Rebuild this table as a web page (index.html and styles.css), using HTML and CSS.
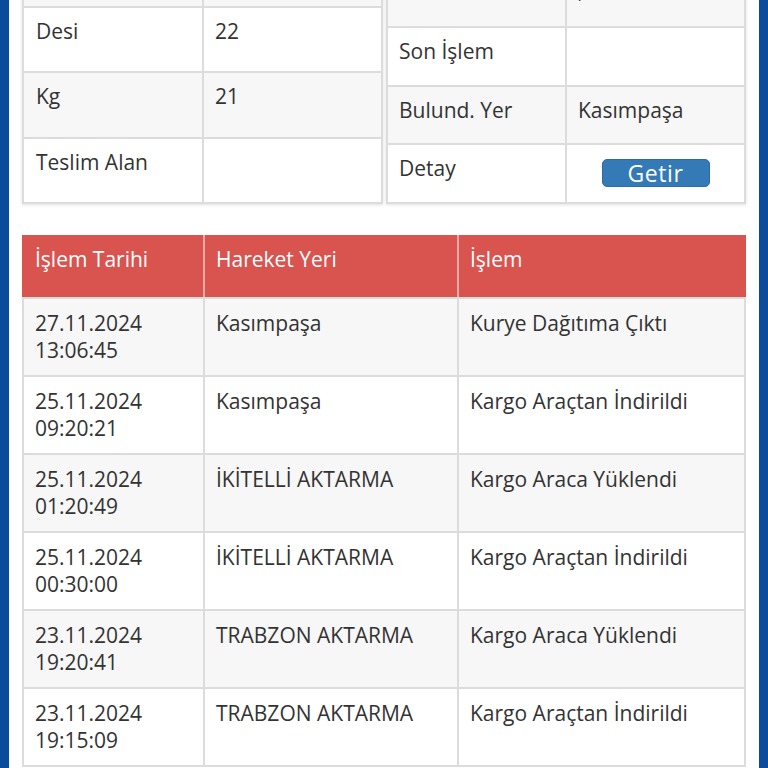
FILE: index.html
```html
<!DOCTYPE html>
<html lang="tr">
<head>
<meta charset="utf-8">
<title>Kargo Takip</title>
<link rel="stylesheet" href="styles.css">
</head>
<body>
<div class="frame">
  <div class="side"></div>
  <main class="main">
    <section class="info">
      <div class="kv kv-left">
        <div class="kv-row alt"><div class="k"></div><div class="v"></div></div>
        <div class="kv-row"><div class="k">Desi</div><div class="v">22</div></div>
        <div class="kv-row alt"><div class="k">Kg</div><div class="v">21</div></div>
        <div class="kv-row"><div class="k">Teslim Alan</div><div class="v"></div></div>
      </div>
      <div class="kv kv-right">
        <div class="kv-row alt"><div class="k"></div><div class="v">,</div></div>
        <div class="kv-row"><div class="k">Son İşlem</div><div class="v"></div></div>
        <div class="kv-row alt"><div class="k">Bulund. Yer</div><div class="v">Kasımpaşa</div></div>
        <div class="kv-row"><div class="k">Detay</div><div class="v center"><button class="btn">Getir</button></div></div>
      </div>
    </section>

    <section class="moves">
      <div class="mv-row mv-head">
        <div class="c">İşlem Tarihi</div><div class="c">Hareket Yeri</div><div class="c">İşlem</div>
      </div>
      <div class="mv-row alt">
        <div class="c">27.11.2024<br>13:06:45</div><div class="c">Kasımpaşa</div><div class="c">Kurye Dağıtıma Çıktı</div>
      </div>
      <div class="mv-row">
        <div class="c">25.11.2024<br>09:20:21</div><div class="c">Kasımpaşa</div><div class="c">Kargo Araçtan İndirildi</div>
      </div>
      <div class="mv-row alt">
        <div class="c">25.11.2024<br>01:20:49</div><div class="c">İKİTELLİ AKTARMA</div><div class="c">Kargo Araca Yüklendi</div>
      </div>
      <div class="mv-row">
        <div class="c">25.11.2024<br>00:30:00</div><div class="c">İKİTELLİ AKTARMA</div><div class="c">Kargo Araçtan İndirildi</div>
      </div>
      <div class="mv-row alt">
        <div class="c">23.11.2024<br>19:20:41</div><div class="c">TRABZON AKTARMA</div><div class="c">Kargo Araca Yüklendi</div>
      </div>
      <div class="mv-row">
        <div class="c">23.11.2024<br>19:15:09</div><div class="c">TRABZON AKTARMA</div><div class="c">Kargo Araçtan İndirildi</div>
      </div>
    </section>
  </main>
  <div class="side"></div>
</div>
</body>
</html>
```

FILE: styles.css
```css
* { box-sizing: border-box; }
html, body { margin: 0; padding: 0; background: #fff; }
body {
  font-family: "Open Sans", "Noto Sans", sans-serif;
  font-size: 21px;
  line-height: 27px;
  color: #333;
}
.frame { display: flex; min-height: 100vh; }
.side { width: 9px; flex: none; background: #0b4b9b; }
.main { flex: 1; min-width: 0; padding: 0 13px 40px; }

/* info tables */
.info {
  display: flex;
  align-items: flex-end;
  gap: 3px;
  margin-top: -61.33px;
}
.kv {
  border: 2px solid #dcdcdc;
  background: #fff;
  box-shadow: 0 1px 3px rgba(0, 0, 0, 0.12);
}
.kv-left { width: 361px; }
.kv-right { width: 360px; }
.kv-row {
  display: grid;
  border-top: 2px solid #dcdcdc;
  background: #fff;
}
.kv-row:first-child { border-top: 0; }
.kv-row.alt { background: #f7f7f7; }
.kv-left .kv-row { grid-template-columns: 178px 1fr; height: 65.33px; }
.kv-right .kv-row { grid-template-columns: 177px 1fr; height: 58.67px; }
.k, .v { padding: 10px 11px; }
.kv-left .k { padding-left: 12px; }
.v { border-left: 2px solid #dcdcdc; }
.v.center { display: flex; justify-content: center; padding-top: 14px; }
.btn {
  width: 108px;
  height: 28px;
  padding: 0;
  border: 1px solid #2e6da4;
  border-radius: 5px;
  background: #337ab7;
  color: #fff;
  font-family: "Open Sans", "Noto Sans", sans-serif;
  font-size: 23px;
  font-weight: 500;
  line-height: 24px;
  letter-spacing: 0.6px;
}

/* movements table */
.moves { margin-top: 31px; }
.mv-row {
  display: grid;
  grid-template-columns: 181px 254px 1fr;
  height: 78px;
  border-bottom: 2px solid #dcdcdc;
  background: #fff;
}
.mv-row.alt { background: #f7f7f7; }
.mv-row .c {
  padding: 11px 11px 0 11px;
  border-left: 2px solid #dcdcdc;
}
.mv-row .c:last-child { border-right: 2px solid #dcdcdc; }
.mv-head {
  height: 64px;
  background: #d9534f;
  color: #fff;
}
.mv-head .c {
  padding-top: 11px;
  border-left-color: #eba9a7;
}
.mv-head .c:first-child { border-left-color: #d9534f; }
.mv-head .c:last-child { border-right-color: #d9534f; }
```
